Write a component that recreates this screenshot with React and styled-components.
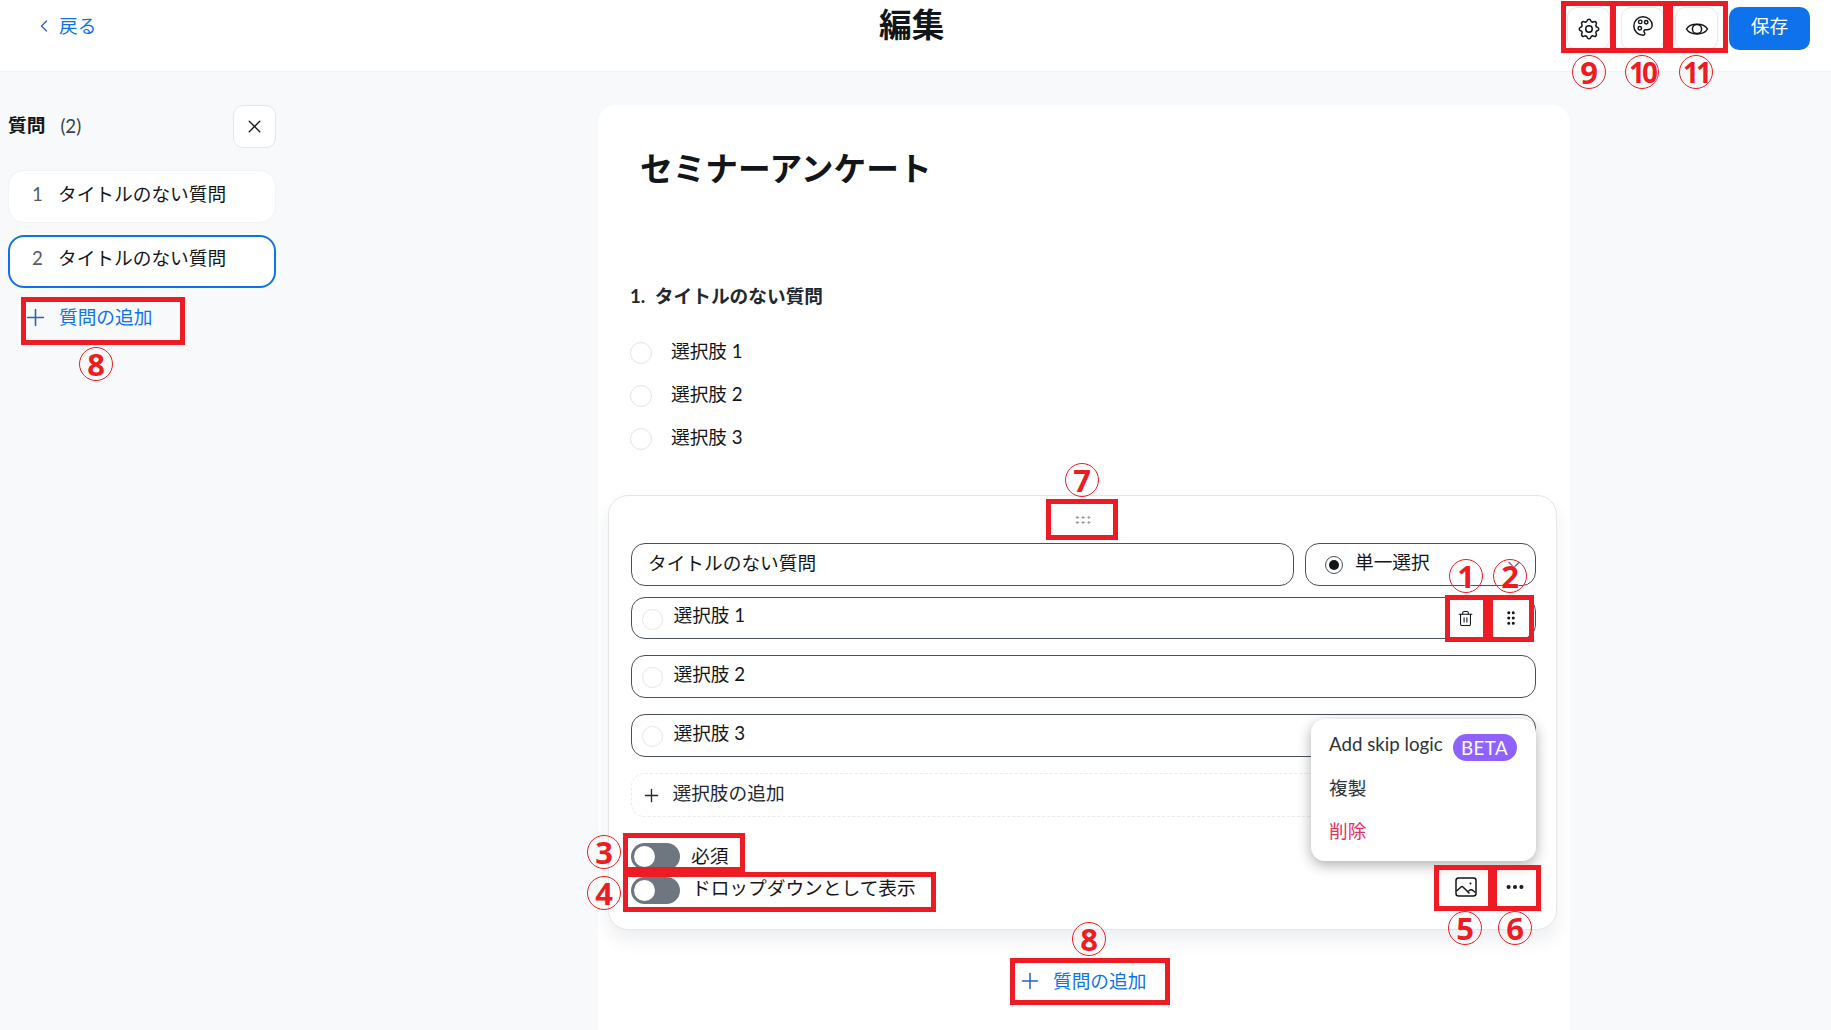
import styled, { createGlobalStyle } from "styled-components";
import { ChevronLeft, ChevronDown, X, Plus, Trash2, GripVertical, GripHorizontal, Ellipsis } from "lucide-react";
import { TbSettings } from "react-icons/tb";

const BLUE = "#0e72ed";
const INK = "#131619";
const LINE = "#4a505a";
const SOFT = "#e4e6ea";
const RED = "#ed1c24";

const GlobalStyle = createGlobalStyle`
  html, body { margin: 0; padding: 0; background: #f7f9fa; overflow: hidden; }
  body {
    font-family: Lato, "Noto Sans CJK JP", sans-serif;
    font-size: 18.7px;
    color: ${INK};
  }
  * { box-sizing: border-box; }
`;

const Page = styled.div`
  position: relative;
  width: 1831px;
  height: 1030px;
  overflow: hidden;
`;

const Header = styled.header`
  display: flex;
  align-items: flex-start;
  height: 72px;
  padding: 7px 21px 0 34px;
  background: #fff;
  border-bottom: 1px solid #f1f3f5;
`;

const HeaderLeft = styled.div`
  width: 845px;
`;

const BackLink = styled.a`
  display: inline-flex;
  align-items: center;
  gap: 5px;
  height: 34px;
  color: ${BLUE};
  svg { color: #2a62b8; margin-top: 4px; }
`;

const PageTitle = styled.h1`
  margin: 0;
  font-size: 32.7px;
  line-height: 36px;
  font-weight: 700;
`;

const HeaderActions = styled.div`
  display: flex;
  gap: 11px;
  margin-left: auto;
`;

const IconButton = styled.button`
  display: flex;
  align-items: center;
  justify-content: center;
  width: 43px;
  height: 43px;
  padding: 0 0 ${(p) => p.$lift || 0}px;
  background: #fff;
  border: 1px solid ${SOFT};
  border-radius: 10px;
  color: ${INK};
`;

const SaveButton = styled.button`
  width: 81px;
  height: 43px;
  padding: 0 0 9px;
  background: ${BLUE};
  border: 0;
  border-radius: 10px;
  color: #fff;
  font: inherit;
`;

const Body = styled.div`
  display: flex;
  gap: 322px;
  padding: 33px 0 0 8px;
`;

const Sidebar = styled.aside`
  width: 268px;
`;

const SideHead = styled.div`
  display: flex;
  align-items: center;
  justify-content: space-between;
  margin-bottom: 22px;
`;

const SideTitle = styled.div`
  display: flex;
  align-items: center;
  gap: 15px;
  b { font-weight: 700; margin-bottom: 7px; }
  span { color: #39404a; margin-bottom: 2px; }
`;

const SideList = styled.div`
  display: flex;
  flex-direction: column;
  gap: 12px;
`;

const SideItem = styled.div`
  display: flex;
  height: 53px;
  padding: ${(p) => (p.$active ? "7px 0 0 22px" : "9px 0 0 23px")};
  line-height: 28px;
  background: #fff;
  border: ${(p) => (p.$active ? `2px solid ${BLUE}` : "1px solid #f1f3f5")};
  border-radius: 16px;
  span:first-child {
    width: 26px;
    color: #555c66;
  }
`;

const AddQuestion = styled.a`
  display: inline-flex;
  align-items: center;
  gap: 10px;
  height: 38px;
  color: ${BLUE};
  svg { color: #2a62b8; margin-top: 4px; }
`;

const SideAdd = styled(AddQuestion)`
  margin: 8px 0 0 14px;
`;

const Panel = styled.main`
  width: 972px;
  height: 1000px;
  padding-top: 41px;
  background: #fff;
  border-radius: 18px;
`;

const SurveyTitle = styled.h2`
  margin: 0 0 0 42px;
  font-size: 32.7px;
  line-height: 46px;
  font-weight: 700;
`;

const Preview = styled.section`
  margin: 90px 0 0 32px;
`;

const PreviewTitle = styled.div`
  font-weight: 700;
  line-height: 28px;
  color: #22282f;
  word-spacing: 5px;
`;

const PreviewOptions = styled.div`
  display: flex;
  flex-direction: column;
  gap: 15px;
  margin-top: 27px;
`;

const PreviewOption = styled.label`
  display: flex;
  align-items: center;
  gap: 19px;
  height: 28px;
`;

const PreviewText = styled.span`
  margin-bottom: 4px;
`;

const Radio = styled.span`
  display: block;
  flex: none;
  width: ${(p) => p.$size}px;
  height: ${(p) => p.$size}px;
  margin-top: ${(p) => p.$drop}px;
  border: 1px solid ${SOFT};
  border-radius: 50%;
  background: #fff;
`;

const QuestionCard = styled.section`
  position: relative;
  width: 949px;
  height: 435px;
  margin: 44px 0 0 10px;
  padding: 0 20px 0 22px;
  background: #fff;
  border: 1px solid ${SOFT};
  border-radius: 20px;
  box-shadow: 0 10px 18px rgba(30, 40, 60, 0.08);
`;

const DragHandle = styled.div`
  display: flex;
  align-items: center;
  justify-content: center;
  height: 47px;
  color: #7d848d;
  padding: 0 2px 0 0;
`;

const CardTop = styled.div`
  display: flex;
  gap: 11px;
`;

const Field = styled.div`
  position: relative;
  display: flex;
  align-items: center;
  height: ${(p) => p.$h || 43}px;
  margin-top: ${(p) => p.$top || 0}px;
  padding-left: 9.5px;
  border: 1.5px solid ${LINE};
  border-radius: 14px;
`;

const TitleField = styled(Field)`
  width: 663px;
  padding: 0 0 7px 16px;
`;

const TypeField = styled(Field)`
  flex: 1;
  gap: 12px;
  padding: 0 0 9px 19px;
  svg {
    position: absolute;
    right: 11px;
    top: 11px;
    color: #6e7680;
  }
`;

const DotRadio = styled.span`
  display: flex;
  align-items: center;
  justify-content: center;
  width: 18px;
  height: 18px;
  margin-top: 9px;
  border: 1px solid ${LINE};
  border-radius: 50%;
  &::after {
    content: "";
    width: 10px;
    height: 10px;
    border-radius: 50%;
    background: ${INK};
  }
`;

const OptionText = styled.span`
  margin: 0 0 9px 11px;
`;

const OptionTools = styled.div`
  position: absolute;
  right: 0;
  top: 0;
  bottom: 0;
  display: flex;
  align-items: center;
  padding-right: 2px;
  svg { display: block; }
`;

const ToolButton = styled.span`
  display: flex;
  align-items: center;
  justify-content: center;
  width: 45px;
  color: ${INK};
`;

const AddOption = styled.div`
  display: flex;
  align-items: center;
  gap: 10.5px;
  height: 44px;
  margin-top: 16px;
  padding: 0 0 8px 9px;
  border: 1px dashed #e9ebee;
  border-radius: 14px;
  color: #232830;
  svg { margin-top: 8px; }
`;

const CardBottom = styled.div`
  display: flex;
  justify-content: space-between;
  margin-top: 26px;
`;

const Toggles = styled.div`
  display: flex;
  flex-direction: column;
  gap: 7px;
`;

const ToggleRow = styled.label`
  display: flex;
  align-items: center;
  gap: 11px;
  height: 27px;
`;

const ToggleText = styled.span`
  margin: 0 0 ${(p) => p.$lift}px ${(p) => p.$nudge || 0}px;
`;

const Toggle = styled.span`
  display: block;
  width: 49px;
  height: 27px;
  padding: 3px;
  border-radius: 14px;
  background: #6e7680;
  &::after {
    content: "";
    display: block;
    width: 21px;
    height: 21px;
    border-radius: 50%;
    background: #fff;
  }
`;

const BottomTools = styled.div`
  display: flex;
  padding: 30px 0 0;
  margin-right: -3px;
`;

const BottomTool = styled.span`
  display: flex;
  align-items: center;
  justify-content: center;
  width: 49px;
  height: 28px;
  color: ${INK};
`;

const Menu = styled.div`
  position: absolute;
  top: 223px;
  right: 20px;
  display: flex;
  flex-direction: column;
  width: 225px;
  height: 142px;
  padding: 3px 0 0 18px;
  background: #fff;
  border-radius: 14px;
  box-shadow: 0 4px 14px rgba(0, 0, 0, 0.32);
`;

const MenuItem = styled.div`
  display: flex;
  align-items: center;
  gap: 10px;
  height: 43px;
  color: ${(p) => (p.$danger ? "#e8315d" : "#2d3239")};
`;

const BetaPill = styled.span`
  display: flex;
  align-items: center;
  justify-content: center;
  width: 64px;
  height: 27px;
  margin-top: 8px;
  border-radius: 14px;
  background: #8f62ff;
  color: #fff;
  letter-spacing: 0.5px;
`;

const BottomAdd = styled.div`
  margin: 30px 0 0 419px;
`;

const MarkBox = styled.div`
  position: absolute;
  left: ${(p) => p.$x}px;
  top: ${(p) => p.$y}px;
  width: ${(p) => p.$w}px;
  height: ${(p) => p.$h}px;
  border: 5px solid ${RED};
  pointer-events: none;
`;

const MarkNumber = styled.div`
  position: absolute;
  left: ${(p) => p.$x - 17}px;
  top: ${(p) => p.$y - 17}px;
  display: flex;
  align-items: center;
  justify-content: center;
  width: 34px;
  height: 34px;
  border: 1.5px solid ${RED};
  border-radius: 50%;
  color: ${RED};
  font-family: "Noto Sans", sans-serif;
  font-weight: 700;
  font-size: ${(p) => (p.$wide ? 28 : 31)}px;
  line-height: 1;
  letter-spacing: ${(p) => (p.$wide ? "-3px" : "0")};
  text-shadow: 0 0 2px #fff;
`;

const boxes = [
  { x: 1561, y: 1, w: 54, h: 52 },
  { x: 1611, y: 1, w: 57, h: 52 },
  { x: 1668, y: 1, w: 60, h: 52 },
  { x: 21, y: 297, w: 164, h: 48 },
  { x: 1046, y: 499, w: 72, h: 41 },
  { x: 1445, y: 595, w: 43, h: 47 },
  { x: 1488, y: 595, w: 46, h: 47 },
  { x: 1434, y: 865, w: 59, h: 46 },
  { x: 1492, y: 865, w: 49, h: 46 },
  { x: 623, y: 833, w: 122, h: 39 },
  { x: 623, y: 872, w: 313, h: 40 },
  { x: 1010, y: 958, w: 160, h: 47 },
];

const numbers = [
  { n: 9, x: 1589, y: 72 },
  { n: 10, x: 1642, y: 72 },
  { n: 11, x: 1696, y: 72 },
  { n: 8, x: 96, y: 364 },
  { n: 7, x: 1082, y: 480 },
  { n: 1, x: 1466, y: 576 },
  { n: 2, x: 1510, y: 576 },
  { n: 5, x: 1465, y: 928 },
  { n: 6, x: 1515, y: 928 },
  { n: 3, x: 604, y: 852 },
  { n: 4, x: 604, y: 893 },
  { n: 8, x: 1089, y: 939 },
];

const previewOptions = ["選択肢 1", "選択肢 2", "選択肢 3"];

function PictureIcon() {
  return (
    <svg width="22" height="20" viewBox="0 0 22 20" fill="none" stroke="currentColor" strokeWidth="1.5">
      <rect x="1" y="1" width="20" height="18" rx="2.5" />
      <path d="M1.5 14 L6 10 Q7 9.2 8 10 L14.5 16.5 M13 14.5 L15 13 Q16 12.4 17 13 L20.5 15.5" />
      <circle cx="15.5" cy="6.5" r="1" fill="currentColor" stroke="none" />
    </svg>
  );
}

function PaletteIcon() {
  return (
    <svg width="22" height="22" viewBox="0 0 24 24" fill="none" stroke="currentColor" strokeWidth="1.6">
      <path d="M12 22a1 1 0 0 1 0-20 10 9 0 0 1 10 9 5 5 0 0 1-5 5h-2.25a1.75 1.75 0 0 0-1.4 2.8l.3.4a1.75 1.75 0 0 1-1.4 2.8z" />
      <circle cx="9" cy="7.5" r="1.9" />
      <circle cx="15.5" cy="8" r="1.9" />
      <circle cx="8.5" cy="14.5" r="1.9" />
    </svg>
  );
}

function EyeIcon() {
  return (
    <svg width="24" height="24" viewBox="0 0 24 24" fill="none" stroke="currentColor" strokeWidth="1.5">
      <path d="M1.5 12 C5 5.5 19 5.5 22.5 12 C19 18.5 5 18.5 1.5 12 Z" />
      <circle cx="12" cy="12" r="4.6" />
    </svg>
  );
}

export default function App() {
  return (
    <Page>
      <GlobalStyle />
      <Header>
        <HeaderLeft>
          <BackLink>
            <ChevronLeft size={20} strokeWidth={1.5} />
            戻る
          </BackLink>
        </HeaderLeft>
        <PageTitle>編集</PageTitle>
        <HeaderActions>
          <IconButton>
            <TbSettings size={26} strokeWidth={1.4} />
          </IconButton>
          <IconButton $lift={6}>
            <PaletteIcon />
          </IconButton>
          <IconButton>
            <EyeIcon />
          </IconButton>
          <SaveButton>保存</SaveButton>
        </HeaderActions>
      </Header>

      <Body>
        <Sidebar>
          <SideHead>
            <SideTitle>
              <b>質問</b>
              <span>(2)</span>
            </SideTitle>
            <IconButton>
              <X size={21} strokeWidth={1.5} />
            </IconButton>
          </SideHead>
          <SideList>
            <SideItem>
              <span>1</span>
              <span>タイトルのない質問</span>
            </SideItem>
            <SideItem $active>
              <span>2</span>
              <span>タイトルのない質問</span>
            </SideItem>
          </SideList>
          <SideAdd>
            <Plus size={27} strokeWidth={1.4} />
            質問の追加
          </SideAdd>
        </Sidebar>

        <Panel>
          <SurveyTitle>セミナーアンケート</SurveyTitle>
          <Preview>
            <PreviewTitle>1. タイトルのない質問</PreviewTitle>
            <PreviewOptions>
              {previewOptions.map((o) => (
                <PreviewOption key={o}>
                  <Radio $size={22} $drop={4} />
                  <PreviewText>{o}</PreviewText>
                </PreviewOption>
              ))}
            </PreviewOptions>
          </Preview>

          <QuestionCard>
            <DragHandle>
              <GripHorizontal size={20} strokeWidth={1.2} />
            </DragHandle>
            <CardTop>
              <TitleField>タイトルのない質問</TitleField>
              <TypeField>
                <DotRadio />
                単一選択
                <ChevronDown size={20} />
              </TypeField>
            </CardTop>
            <Field $h={42} $top={11}>
              <Radio $size={21} $drop={2} />
              <OptionText>選択肢 1</OptionText>
              <OptionTools>
                <ToolButton>
                  <Trash2 size={17} strokeWidth={1.5} />
                </ToolButton>
                <ToolButton>
                  <GripVertical size={18} strokeWidth={2} />
                </ToolButton>
              </OptionTools>
            </Field>
            <Field $top={16}>
              <Radio $size={21} $drop={2} />
              <OptionText>選択肢 2</OptionText>
            </Field>
            <Field $top={16}>
              <Radio $size={21} $drop={2} />
              <OptionText>選択肢 3</OptionText>
            </Field>
            <AddOption>
              <Plus size={21} strokeWidth={1.5} />
              選択肢の追加
            </AddOption>
            <CardBottom>
              <Toggles>
                <ToggleRow>
                  <Toggle />
                  <ToggleText $lift={5}>必須</ToggleText>
                </ToggleRow>
                <ToggleRow>
                  <Toggle />
                  <ToggleText $lift={8} $nudge={1}>ドロップダウンとして表示</ToggleText>
                </ToggleRow>
              </Toggles>
              <BottomTools>
                <BottomTool>
                  <PictureIcon />
                </BottomTool>
                <BottomTool>
                  <Ellipsis size={22} strokeWidth={2.5} />
                </BottomTool>
              </BottomTools>
            </CardBottom>
            <Menu>
              <MenuItem>
                Add skip logic
                <BetaPill>BETA</BetaPill>
              </MenuItem>
              <MenuItem>複製</MenuItem>
              <MenuItem $danger>削除</MenuItem>
            </Menu>
          </QuestionCard>

          <BottomAdd>
            <AddQuestion>
              <Plus size={26} strokeWidth={1.4} />
              質問の追加
            </AddQuestion>
          </BottomAdd>
        </Panel>
      </Body>

      {boxes.map((b) => (
        <MarkBox key={`${b.x}-${b.y}`} $x={b.x} $y={b.y} $w={b.w} $h={b.h} />
      ))}
      {numbers.map((m) => (
        <MarkNumber key={`${m.x}-${m.y}`} $x={m.x} $y={m.y} $wide={m.n > 9}>
          {m.n}
        </MarkNumber>
      ))}
    </Page>
  );
}
